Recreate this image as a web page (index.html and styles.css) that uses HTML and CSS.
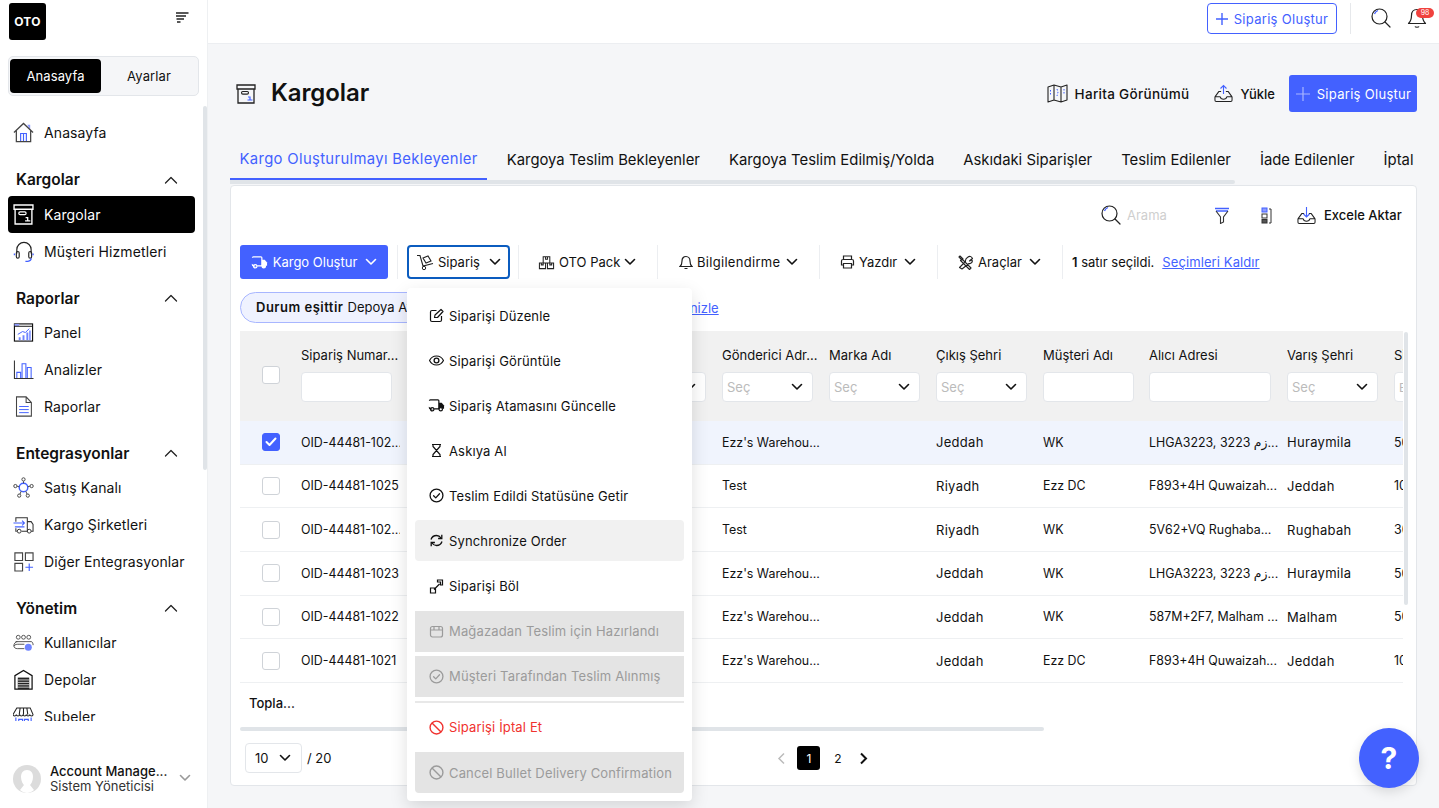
FILE: index.html
```html
<!DOCTYPE html>
<html lang="tr">
<head>
<meta charset="utf-8">
<title>Kargolar</title>
<link rel="stylesheet" href="styles.css">
</head>
<body>
<svg class="sprite" xmlns="http://www.w3.org/2000/svg">
  <symbol id="chev" viewBox="0 0 12 8"><path d="M1.5 1.5 6 6l4.5-4.5" fill="none" stroke="currentColor" stroke-width="1.6" stroke-linecap="round" stroke-linejoin="round"/></symbol>
  <symbol id="chevup" viewBox="0 0 14 8"><path d="M1.5 7 7 1.5 12.500 7" fill="none" stroke="currentColor" stroke-width="1.3" stroke-linecap="round" stroke-linejoin="round"/></symbol>
  <symbol id="search" viewBox="0 0 20 20"><circle cx="8.500" cy="8.500" r="7.500" fill="none" stroke="#222" stroke-width="1.200"/><path d="M3.500 6A5.500 5.500 0 0 1 7 2.500" fill="none" stroke="#4361ff" stroke-width="1.200"/><path d="m14 14 5 5" stroke="#222" stroke-width="1.200" stroke-linecap="round"/></symbol>
  <symbol id="tray" viewBox="0 0 20 20"><path d="M1 13.500 5 8h2.500M19 13.500 15 8h-2.500M1 13.500h5.500c.5 2 1.500 2.500 3.500 2.500s3-.5 3.500-2.500H19v3.700c0 .8-.6 1.300-1.300 1.300H2.300c-.7 0-1.300-.5-1.300-1.300z" fill="none" stroke="#222" stroke-width="1.100" stroke-linejoin="round"/></symbol>
  <symbol id="box" viewBox="0 0 20 20"><path d="M1 1h18v4H1zM2 5v14h16V5" fill="none" stroke="currentColor" stroke-width="1.300"/><rect x="5.500" y="7.500" width="7" height="2.600" rx="1.300" fill="none" stroke="currentColor" stroke-width="1.100"/><path d="M12 13h2v3m-2.500 0h5" fill="none" stroke="var(--accent,#4361ff)" stroke-width="1.200"/></symbol>
  <symbol id="truck" viewBox="0 0 18 15"><path d="M1.500 2.500c0-.6.400-1 1-1h8c.6 0 1 .4 1 1v8.500h-5M3 11H2.500c-.6 0-1-.4-1-1z" fill="none" stroke="currentColor" stroke-width="1.300"/><path d="M11.500 4.500h3l2.500 3v3.500h-1.500h-4z" fill="currentColor"/><circle cx="4.500" cy="11.500" r="1.800" fill="none" stroke="currentColor" stroke-width="1.300"/><circle cx="13.500" cy="11.500" r="1.800" fill="#fff" stroke="currentColor" stroke-width="1.300"/></symbol>
  <symbol id="checkc" viewBox="0 0 14 14"><circle cx="7" cy="7" r="6" fill="none" stroke="currentColor" stroke-width="1.200"/><path d="m4.300 7.200 2 2 3.500-3.800" fill="none" stroke="currentColor" stroke-width="1.200" stroke-linecap="round" stroke-linejoin="round"/></symbol>
  <symbol id="ban" viewBox="0 0 14 14"><circle cx="7" cy="7" r="6" fill="none" stroke="currentColor" stroke-width="1.300"/><path d="m2.800 2.800 8.400 8.400" stroke="currentColor" stroke-width="1.300"/></symbol>
</svg>

<aside class="sidebar">
  <div class="brand-row">
    <div class="logo">OTO</div>
    <svg class="burger" width="14" height="11" viewBox="0 0 14 11"><path d="M1 1h12.500M1 4h10M1.500 7h7.500M2 10h3.500" stroke="#222" stroke-width="1.300" fill="none"/></svg>
  </div>
  <div class="switch">
    <div class="switch-item is-on">Anasayfa</div>
    <div class="switch-item">Ayarlar</div>
  </div>
  <div class="nav-wrap">
    <nav class="nav">
      <a class="nav-item"><svg class="nav-ic" viewBox="0 0 22 22"><path d="M15 3h3v5" fill="#8d9bff"/><path d="M1 11 11 1.500 21 11M3.500 9v11.500h15V9" fill="none" stroke="#444" stroke-width="1.300"/><path d="M8 20V12h6v8M11 12v8" fill="none" stroke="#4361ff" stroke-width="1.200"/></svg><span>Anasayfa</span></a>

      <div class="group"><span>Kargolar</span><svg class="up"><use href="#chevup"/></svg></div>
      <a class="nav-item is-active"><svg class="nav-ic ic-white"><use href="#box"/></svg><span>Kargolar</span></a>
      <a class="nav-item"><svg class="nav-ic" viewBox="0 0 22 22"><path d="M4 13V9a7.500 7.500 0 0 1 15 0v4" fill="none" stroke="#222" stroke-width="1.200"/><rect x="3.500" y="11" width="3" height="7" rx="1.500" fill="none" stroke="#222" stroke-width="1.200"/><rect x="16.500" y="11" width="3" height="7" rx="1.500" fill="none" stroke="#222" stroke-width="1.200"/><path d="M1.500 13v2M21 13v2M19 18c0 2-2 3.500-6 3.500" fill="none" stroke="#4361ff" stroke-width="1.400"/></svg><span>Müşteri Hizmetleri</span></a>

      <div class="group"><span>Raporlar</span><svg class="up"><use href="#chevup"/></svg></div>
      <a class="nav-item"><svg class="nav-ic" viewBox="0 0 22 22"><rect x="1.500" y="2" width="19" height="18" fill="none" stroke="#111" stroke-width="1.200"/><path d="M1.500 2h5v2h-5z" fill="#8d9bff"/><path d="M1.500 4.500h19" stroke="#111"/><path d="M6 19v-3h2v3zm4 0v-5h2v5zm4 0V11h2v8zm3 0V9h1.500v10z" fill="#6f84ff"/><path d="m5 13 5-3 3 1 4-4" fill="none" stroke="#4361ff"/></svg><span>Panel</span></a>
      <a class="nav-item"><svg class="nav-ic" viewBox="0 0 22 22"><path d="M1.500 1.500v19h20" fill="none" stroke="#333" stroke-width="1.100"/><path d="M4 20v-6h4v6M9.500 20V5h4v15M15 20V9h4v11" fill="none" stroke="#4361ff" stroke-width="1.100"/></svg><span>Analizler</span></a>
      <a class="nav-item"><svg class="nav-ic" viewBox="0 0 22 24"><path d="M3 1h11l6 6.500V23H3zM14 1v6.500h6" fill="none" stroke="#444" stroke-width="1.200"/><path d="M6 12h11M6 15.500h11M6 19h11" stroke="#4361ff" stroke-width="1.100"/></svg><span>Raporlar</span></a>

      <div class="group"><span>Entegrasyonlar</span><svg class="up"><use href="#chevup"/></svg></div>
      <a class="nav-item"><svg class="nav-ic" viewBox="0 0 22 22"><circle cx="11" cy="11" r="4.500" fill="none" stroke="#4361ff" stroke-width="1.500"/><g fill="none" stroke="#444" stroke-width="1"><circle cx="11" cy="2.500" r="1.700"/><circle cx="2.500" cy="9.500" r="1.700"/><circle cx="19.500" cy="9.500" r="1.700"/><circle cx="6.500" cy="19.500" r="1.700"/><circle cx="15.500" cy="19.500" r="1.700"/><path d="M11 4.500v2M4.300 9.700l2.200.5M17.700 9.700l-2.200.5M7.300 18l1.200-3M14.700 18l-1.200-3"/></g></svg><span>Satış Kanalı</span></a>
      <a class="nav-item"><svg class="nav-ic" viewBox="0 0 22 22"><path d="M3 8V4h12v14H9M15 8h4l2 3v7h-2M3 15v3h1" fill="none" stroke="#333" stroke-width="1.100"/><circle cx="6.500" cy="18" r="2" fill="none" stroke="#333"/><circle cx="17" cy="18" r="2" fill="none" stroke="#333"/><path d="M.5 9.500H12m-2.500-2.500L12 9.500 9.500 12M12 13.500H2" fill="none" stroke="#4361ff" stroke-width="1.100"/></svg><span>Kargo Şirketleri</span></a>
      <a class="nav-item"><svg class="nav-ic" viewBox="0 0 22 22"><path d="M2 2h8v8H2zM13 2h8v8h-8zM2 13h8v8H2z" fill="none" stroke="#444" stroke-width="1.200"/><path d="M17 13v8M13 17h8" stroke="#4361ff" stroke-width="1.200"/></svg><span>Diğer Entegrasyonlar</span></a>

      <div class="group"><span>Yönetim</span><svg class="up"><use href="#chevup"/></svg></div>
      <a class="nav-item"><svg class="nav-ic" viewBox="0 0 24 22"><g fill="none" stroke="#444" stroke-width="1"><circle cx="6" cy="5" r="2.200"/><circle cx="12" cy="5" r="2.200"/><circle cx="18" cy="5" r="2.200"/><path d="M3 10h18M1 15c0-3 2-5 4-5M23 14c0-2-1-4-2-4M1 15c0 2 2 3 4 3h8M1 15c1-2 4-2 6-2h6"/></g><circle cx="17.500" cy="16.500" r="4" fill="#6f84ff"/></svg><span>Kullanıcılar</span></a>
      <a class="nav-item"><svg class="nav-ic" viewBox="0 0 22 22"><path d="M2 21V7l9-5.500L20 7v14z" fill="none" stroke="#111" stroke-width="1.300"/><path d="M5 9h12v12H5z" fill="#222"/><path d="M5 11.500h12M5 14h12M5 16.500h12M5 19h12" stroke="#fff" stroke-width=".8"/></svg><span>Depolar</span></a>
      <a class="nav-item"><svg class="nav-ic" viewBox="0 0 22 22"><path d="M4 2h14l3 7c0 2-3 2-3.500 0-.5 2-3 2-3.500 0-.5 2-3 2-3.500 0-.5 2-3 2-3.500 0-.5 2-3 2-3.500 0-.5 2-3 2-3.500 0zM7.500 2l-1 7M11 2v7M14.500 2l1 7" fill="none" stroke="#222" stroke-width="1.100"/><path d="M3 12v9h16v-9M6 14h4v7H6zM12 14h4v7h-4z" fill="none" stroke="#4361ff" stroke-width="1.200"/></svg><span>Şubeler</span></a>
    </nav>
    <div class="nav-thumb"></div>
  </div>
  <div class="user">
    <svg class="avatar" viewBox="0 0 28 28"><circle cx="14" cy="14" r="14" fill="#dcdcdc"/><path d="M14 5c4 0 6 3 6 7s-2 7-3 8l4 5c-2 2-5 3-7 3s-5-1-7-3l4-5c-1-1-3-4-3-8s2-7 6-7z" fill="#fff"/></svg>
    <div class="user-text"><strong>Account Manage...</strong><span>Sistem Yöneticisi</span></div>
    <svg class="user-chev"><use href="#chev"/></svg>
  </div>
</aside>

<div class="main">
  <header class="topbar">
    <button class="btn-outline"><svg width="12" height="12" viewBox="0 0 12 12"><path d="M6 0v12M0 6h12" stroke="#4361ff" stroke-width="1.400"/></svg>Sipariş Oluştur</button>
    <div class="top-sep"></div>
    <svg class="top-search"><use href="#search"/></svg>
    <div class="bell">
      <svg width="20" height="22" viewBox="0 0 20 22"><path d="M10 2.500c-3.500 0-5.500 2.500-5.500 6 0 4-1 6-3 8h17c-2-2-3-4-3-8 0-3.500-2-6-5.500-6zM8 19.500c.5 1 3.500 1 4 0" fill="none" stroke="#222" stroke-width="1.200" stroke-linejoin="round"/></svg>
      <span class="badge">98</span>
    </div>
  </header>

  <main class="page">
    <div class="page-head">
      <div class="title-wrap">
        <svg class="title-ic"><use href="#box"/></svg>
        <h1>Kargolar</h1>
      </div>
      <div class="head-actions">
        <a class="head-link head-map"><svg width="21" height="19" viewBox="0 0 21 19"><path d="M1 3l6-2 7 2 6-2v15l-6 2-7-2-6 2zM7 1v15M14 3v15" fill="none" stroke="#222" stroke-width="1.100" stroke-linejoin="round"/><path d="M3.500 6v5M10 5l1 3-1 4M17 5v5" fill="none" stroke="#4361ff" stroke-dasharray="1.500 1.500"/></svg>Harita Görünümü</a>
        <a class="head-link head-link-2"><svg width="19" height="19"><use href="#tray"/><path d="M9.500 10V1.500M6.500 4.500l3-3 3 3" fill="none" stroke="#4361ff" stroke-width="1.100"/></svg>Yükle</a>
        <button class="btn-primary"><svg width="16" height="16" viewBox="0 0 16 16"><path d="M8 1v14M1 8h14" stroke="#a9b6ff" stroke-width="1.200"/></svg>Sipariş Oluştur</button>
      </div>
    </div>

    <div class="tabs-wrap">
      <div class="tabs">
        <a class="tab is-current">Kargo Oluşturulmayı Bekleyenler</a>
        <a class="tab">Kargoya Teslim Bekleyenler</a>
        <a class="tab">Kargoya Teslim Edilmiş/Yolda</a>
        <a class="tab">Askıdaki Siparişler</a>
        <a class="tab">Teslim Edilenler</a>
        <a class="tab">İade Edilenler</a>
        <a class="tab">İptal Edilenler</a>
      </div>
      <div class="tabs-track"></div>
    </div>

    <section class="card">
      <div class="tools">
        <svg class="tool-search"><use href="#search"/></svg>
        <input class="search-input" placeholder="Arama">
        <svg class="tool-filter" width="16" height="17" viewBox="0 0 16 17"><path d="M1 1.500h14M2 4h12" stroke="#4361ff" stroke-width="1.300"/><path d="M2 4l4.500 6v6.500l3-1.500V10L14 4" fill="none" stroke="#333" stroke-width="1.100"/></svg>
        <svg class="tool-cols" width="11" height="17" viewBox="0 0 11 17"><rect x="1" y="1" width="5" height="4" fill="#8d9bff" stroke="#4361ff"/><rect x="1" y="7" width="5" height="4" fill="none" stroke="#333"/><rect x="1" y="12.500" width="5" height="3.500" fill="#555" stroke="#333"/><path d="M8 2h2v14H8" fill="none" stroke="#333"/></svg>
        <svg class="tool-export" width="19" height="19"><use href="#tray"/><path d="M9.500 1v10M6.500 8l3 3 3-3" fill="none" stroke="#4361ff" stroke-width="1.100"/></svg>
        <span class="tool-text">Excele Aktar</span>
      </div>

      <div class="actions">
        <button class="btn-cargo"><svg width="17" height="15"><use href="#truck"/></svg>Kargo Oluştur<svg class="chev"><use href="#chev"/></svg></button>
        <div class="act-sep act-sep-a"></div>
        <div class="order-wrap">
          <button class="btn-order">
            <svg width="18" height="17" viewBox="0 0 18 17"><path d="M1 1.500h3l3 10.500 10-2.500" fill="none" stroke="#222" stroke-width="1.100"/><circle cx="8" cy="14" r="1.700" fill="none" stroke="#222"/><path d="m7 4 5-2 3 5-5 2z" fill="none" stroke="#222" stroke-width="1.100"/></svg>
            Sipariş<svg class="chev"><use href="#chev"/></svg>
          </button>
          <div class="menu">
            <a class="menu-item"><svg width="15" height="15" viewBox="0 0 15 15"><path d="M12.500 8v4c0 1-.5 1.500-1.500 1.500H3c-1 0-1.500-.5-1.500-1.500V4C1.500 3 2 2.500 3 2.500h4.500" fill="none" stroke="currentColor" stroke-width="1.200"/><path d="M5.500 9.500l.5-2.500 6-5.500 2 2-5.500 6z" fill="none" stroke="currentColor" stroke-width="1.200" stroke-linejoin="round"/></svg>Siparişi Düzenle</a>
            <a class="menu-item"><svg width="15" height="15" viewBox="0 0 15 15"><path d="M.5 7.500C2 4.500 4.500 3 7.500 3s5.500 1.500 7 4.500c-1.500 3-4 4.500-7 4.500s-5.500-1.500-7-4.500z" fill="none" stroke="currentColor" stroke-width="1.200"/><circle cx="7.500" cy="7.500" r="2.400" fill="none" stroke="currentColor" stroke-width="1.300"/></svg>Siparişi Görüntüle</a>
            <a class="menu-item item-truck"><svg width="17" height="15"><use href="#truck"/></svg>Sipariş Atamasını Güncelle</a>
            <a class="menu-item"><svg width="15" height="15" viewBox="0 0 15 15"><path d="M3 1.500h9M3 13.500h9M4 1.500v2L11 11.500v2M11 1.500v2L4 11.500v2" fill="none" stroke="currentColor" stroke-width="1.200"/></svg>Askıya Al</a>
            <a class="menu-item"><svg width="15" height="15"><use href="#checkc"/></svg>Teslim Edildi Statüsüne Getir</a>
            <a class="menu-item is-hover"><svg width="15" height="15" viewBox="0 0 15 15"><path d="M2 6.500C3 3.500 5 2.500 7.500 2.500c2 0 3.500 1 4.500 2.500M13 8.500c-1 3-3 4-5.500 4-2 0-3.500-1-4.500-2.500" fill="none" stroke="currentColor" stroke-width="1.300"/><path d="M12.800 1.800v3.700H9.100M2.200 13.200V9.500h3.700" fill="none" stroke="currentColor" stroke-width="1.300"/></svg>Synchronize Order</a>
            <a class="menu-item"><svg width="15" height="15" viewBox="0 0 15 15"><path d="M8.500 1h5v5h-2V3h-3zM1.500 9h5v5h-5zM5 10.500 10.500 5" fill="none" stroke="currentColor" stroke-width="1.200"/></svg>Siparişi Böl</a>
            <a class="menu-item is-off"><svg width="15" height="15" viewBox="0 0 15 15"><rect x="1.500" y="2.500" width="12" height="10.500" rx="2" fill="none" stroke="currentColor" stroke-width="1.200"/><path d="M1.500 6h12M5 2.500V6M10 2.500V6" fill="none" stroke="currentColor" stroke-width="1.200"/></svg>Mağazadan Teslim için Hazırlandı</a>
            <a class="menu-item is-off"><svg width="15" height="15"><use href="#checkc"/></svg>Müşteri Tarafından Teslim Alınmış</a>
            <div class="menu-div"></div>
            <a class="menu-item is-danger"><svg width="15" height="15"><use href="#ban"/></svg>Siparişi İptal Et</a>
            <a class="menu-item is-off is-last"><svg width="15" height="15"><use href="#ban"/></svg>Cancel Bullet Delivery Confirmation</a>
          </div>
        </div>
        <div class="act-sep act-sep-b"></div>
        <div class="act act-pack"><svg width="17" height="15" viewBox="0 0 18 15"><path d="M1.500 8h6.500v6H1.500zM10 8h6.500v6H10zM5.500 1.500h7V8h-7zM8 1.500V4h2V1.500M3.500 8v2h2V8M12.500 8v2h2V8" fill="none" stroke="#222" stroke-width="1.100"/></svg>OTO Pack<svg class="chev"><use href="#chev"/></svg></div>
        <div class="act-sep"></div>
        <div class="act act-notify"><svg width="14" height="15" viewBox="0 0 14 15"><path d="M7 1.500C4.500 1.500 3 3.500 3 6c0 3-.8 4.500-2 5.500h12c-1.200-1-2-2.500-2-5.500 0-2.500-1.500-4.500-4-4.500zM5.500 13.500h3" fill="none" stroke="#222" stroke-width="1.200"/></svg>Bilgilendirme<svg class="chev"><use href="#chev"/></svg></div>
        <div class="act-sep"></div>
        <div class="act act-print"><svg width="15" height="14" viewBox="0 0 15 14"><path d="M3.500 4.500V1h8v3.500M3.500 10H1.500V6c0-1 .6-1.500 1.500-1.500h9c.9 0 1.500.5 1.500 1.500v4h-2M3.500 8.500h8V13h-8z" fill="none" stroke="#222" stroke-width="1.200"/></svg>Yazdır<svg class="chev"><use href="#chev"/></svg></div>
        <div class="act-sep"></div>
        <div class="act act-tools"><svg width="16" height="15" viewBox="0 0 16 15"><path d="M2 1l3 3-1 1-3-3zM4 4l9 9-1.500 1.500-9-9zM10 2c2-1.500 4 0 4.500 1.500L12.500 5l-1 1L14 5c1 2-1 4-3 3.500L4 14l-2.500-1.500 6-6C7 4 8.500 3 10 2z" fill="none" stroke="#222" stroke-width="1.100" stroke-linejoin="round"/></svg>Araçlar<svg class="chev"><use href="#chev"/></svg></div>
        <div class="act-sep"></div>
        <div class="sel-info"><b>1</b> satır seçildi.</div>
        <a class="link clear-link">Seçimleri Kaldır</a>
      </div>

      <div class="chips">
        <div class="chip"><b>Durum eşittir</b> Depoya Atanmış</div>
        <a class="link">Önizle</a>
      </div>

      <div class="table-area">
        <div class="table-col">
          <div class="table-view">
            <div class="grid-row head">
              <div class="cell cell-check"><span class="check"></span></div>
              <div class="cell"><label>Sipariş Numar...</label><input class="fld"></div>
              <div class="cell span2"></div>
              <div class="cell"><label>Durum</label><div class="fld sel">Seç<svg class="chev"><use href="#chev"/></svg></div></div>
              <div class="cell"><label>Gönderici Adr...</label><div class="fld sel">Seç<svg class="chev"><use href="#chev"/></svg></div></div>
              <div class="cell"><label>Marka Adı</label><div class="fld sel">Seç<svg class="chev"><use href="#chev"/></svg></div></div>
              <div class="cell"><label>Çıkış Şehri</label><div class="fld sel">Seç<svg class="chev"><use href="#chev"/></svg></div></div>
              <div class="cell"><label>Müşteri Adı</label><input class="fld"></div>
              <div class="cell cell-addr"><label>Alıcı Adresi</label><input class="fld"></div>
              <div class="cell"><label>Varış Şehri</label><div class="fld sel">Seç<svg class="chev"><use href="#chev"/></svg></div></div>
              <div class="cell"><label>Sipariş Tutarı</label><input class="fld" placeholder="Başlangıç"></div>
            </div>
            <div class="grid-row row is-selected">
              <div class="cell cell-check"><span class="check is-checked"><svg width="12" height="10" viewBox="0 0 12 10"><path d="m1.500 5 3 3 6-6.500" fill="none" stroke="#fff" stroke-width="2" stroke-linecap="round" stroke-linejoin="round"/></svg></span></div>
              <div class="cell">OID-44481-102...</div><div class="cell span3"></div>
              <div class="cell">Ezz's Warehou...</div><div class="cell"></div><div class="cell city">Jeddah</div><div class="cell">WK</div><div class="cell">LHGA3223, 3223 زم...</div><div class="cell city">Huraymila</div><div class="cell">50.00</div>
            </div>
            <div class="grid-row row">
              <div class="cell cell-check"><span class="check"></span></div>
              <div class="cell">OID-44481-1025</div><div class="cell span3"></div>
              <div class="cell">Test</div><div class="cell"></div><div class="cell city">Riyadh</div><div class="cell">Ezz DC</div><div class="cell">F893+4H Quwaizah...</div><div class="cell city">Jeddah</div><div class="cell">10.00</div>
            </div>
            <div class="grid-row row">
              <div class="cell cell-check"><span class="check"></span></div>
              <div class="cell">OID-44481-102...</div><div class="cell span3"></div>
              <div class="cell">Test</div><div class="cell"></div><div class="cell city">Riyadh</div><div class="cell">WK</div><div class="cell">5V62+VQ Rughaba...</div><div class="cell city">Rughabah</div><div class="cell">30.00</div>
            </div>
            <div class="grid-row row">
              <div class="cell cell-check"><span class="check"></span></div>
              <div class="cell">OID-44481-1023</div><div class="cell span3"></div>
              <div class="cell">Ezz's Warehou...</div><div class="cell"></div><div class="cell city">Jeddah</div><div class="cell">WK</div><div class="cell">LHGA3223, 3223 زم...</div><div class="cell city">Huraymila</div><div class="cell">50.00</div>
            </div>
            <div class="grid-row row">
              <div class="cell cell-check"><span class="check"></span></div>
              <div class="cell">OID-44481-1022</div><div class="cell span3"></div>
              <div class="cell">Ezz's Warehou...</div><div class="cell"></div><div class="cell city">Jeddah</div><div class="cell">WK</div><div class="cell">587M+2F7, Malham ...</div><div class="cell city">Malham</div><div class="cell">50.00</div>
            </div>
            <div class="grid-row row">
              <div class="cell cell-check"><span class="check"></span></div>
              <div class="cell">OID-44481-1021</div><div class="cell span3"></div>
              <div class="cell">Ezz's Warehou...</div><div class="cell"></div><div class="cell city">Jeddah</div><div class="cell">Ezz DC</div><div class="cell">F893+4H Quwaizah...</div><div class="cell city">Jeddah</div><div class="cell">10.00</div>
            </div>
            <div class="total">Topla...</div>
          </div>
          <div class="h-track"><div class="h-thumb"></div></div>
        </div>
        <div class="v-thumb"></div>
      </div>

      <div class="pager-row">
        <div class="size"><span class="size-box">10<svg class="chev"><use href="#chev"/></svg></span><span>/ 20</span></div>
        <div class="pager">
          <svg class="pg-prev" width="9" height="13" viewBox="0 0 9 13"><path d="M7 1.500 2 6.500l5 5" fill="none" stroke="currentColor" stroke-width="1.500"/></svg>
          <span class="pg pg-on">1</span>
          <span class="pg">2</span>
          <svg class="pg-next" width="9" height="13" viewBox="0 0 9 13"><path d="m2 1.500 5 5-5 5" fill="none" stroke="currentColor" stroke-width="2"/></svg>
        </div>
      </div>
    </section>
  </main>
</div>

<button class="help">?</button>
</body>
</html>
```

FILE: styles.css
```css
* { box-sizing: border-box; }
html, body { height: 100%; }
body {
  margin: 0;
  width: 1439px;
  height: 808px;
  overflow: hidden;
  display: flex;
  background: #f5f6f8;
  color: #111;
  font-family: Inter, "Noto Sans", "DejaVu Sans", sans-serif;
  font-size: 13px;
  position: relative;
}
button, input { font: inherit; }
.sprite { display: none; }
svg { flex: none; display: block; }
a { color: inherit; text-decoration: none; }
b, strong { font-weight: 600; }

/* sidebar */
.sidebar {
  width: 208px;
  flex: none;
  height: 808px;
  background: #fff;
  border-right: 1px solid #eef0f2;
  display: flex;
  flex-direction: column;
}
.brand-row { display: flex; align-items: flex-start; padding: 3px 0 0 9px; height: 40px; }
.logo {
  width: 37px; height: 37px; background: #000; color: #fff; border-radius: 3px;
  display: flex; align-items: center; justify-content: center;
  font-weight: 700; font-size: 12px; letter-spacing: .3px;
}
.burger { margin: 9px 0 0 129px; }
.switch {
  margin: 16px 0 0 8px;
  width: 191px; height: 40px;
  background: #f5f6f8;
  border: 1px solid #e3e6ea;
  border-radius: 5px;
  padding: 2px 1px;
  display: flex;
}
.switch-item { flex: 1; display: flex; align-items: center; justify-content: center; border-radius: 4px; font-size: 13px; letter-spacing: .1px; }
.switch-item.is-on { flex: none; width: 91px; background: #000; color: #fff; }
.nav-wrap { flex: 1; min-height: 0; margin-top: 10px; display: flex; }
.nav { width: 203px; flex: none; overflow: hidden; padding: 8.6px 0 0 8px; }
.nav-item {
  display: flex; align-items: center; gap: 10px;
  width: 187px; height: 36.67px;
  padding-left: 5px;
  border-radius: 4px;
  font-size: 14px;
  letter-spacing: .1px;
  white-space: nowrap;
}
.nav-ic { width: 21px; height: 21px; }
.nav-item.is-active { background: #000; color: #fff; }
.ic-white { color: #fff; --accent: #fff; }
.group {
  height: 33px; margin-top: 12px;
  display: flex; align-items: center; justify-content: space-between;
  padding: 0 17px 0 8px; width: 187px;
  font-size: 15.5px; font-weight: 600;
}
.up { width: 14px; height: 8px; color: #222; }
.nav-thumb { width: 4px; height: 364px; background: #e0e4e8; border-radius: 2px; }
.user { height: 87px; flex: none; display: flex; align-items: center; padding: 0 0 0 13px; }
.avatar { width: 28px; height: 28px; margin-top: 28px; }
.user-text { display: flex; flex-direction: column; margin: 28px 0 0 9px; line-height: 15px; font-size: 13px; width: 129px; white-space: nowrap; }
.user-text strong { font-weight: 500; }
.user-text span { color: #333; }
.user-chev { width: 12px; height: 8px; margin-top: 26px; color: #999; }

/* main */
.main { flex: 1; min-width: 0; display: flex; flex-direction: column; }
.topbar {
  height: 44px; flex: none; background: #fff; border-bottom: 1px solid #eceef1;
  display: flex; align-items: flex-start; justify-content: flex-end;
  padding: 3px 12px 0 0;
}
.btn-outline {
  width: 130px; height: 31px; background: #fff; color: #4361ff;
  border: 1px solid #4361ff; border-radius: 4px; white-space: nowrap; padding: 0;
  display: flex; align-items: center; justify-content: center; gap: 6px; font-size: 13px; letter-spacing: .3px;
}
.top-sep { width: 1px; height: 31px; background: #e6e8eb; margin: 0 20px 0 13px; }
.top-search { width: 20px; height: 20px; margin-top: 5px; }
.bell { position: relative; margin: 4px 1px 0 16px; width: 19px; }
.badge {
  position: absolute; left: 9px; top: 1px; width: 18px; height: 10px;
  background: #f0413d; color: #fff; font-size: 7px; line-height: 10px;
  border-radius: 5px; text-align: center;
}
.page { flex: 1; min-height: 0; padding: 31px 22px 0; display: flex; flex-direction: column; }
.page-head { height: 37px; flex: none; display: flex; justify-content: space-between; align-items: center; }
.title-wrap { display: flex; align-items: center; padding-left: 6px; gap: 15px; }
.title-ic { width: 20px; height: 20px; color: #222; }
h1 { margin: -2px 0 0; font-size: 24px; font-weight: 600; letter-spacing: -.1px; }
.head-actions { display: flex; align-items: center; }
.head-link { display: flex; align-items: center; gap: 7px; font-weight: 500; white-space: nowrap; }
.head-map { font-size: 13.5px; letter-spacing: .3px; }
.head-link-2 { margin: 0 14px 0 25px; }
.btn-primary {
  width: 128px; height: 37px; border: 0; border-radius: 3px; background: #4361ff; color: #fff;
  display: flex; align-items: center; justify-content: center; gap: 6px; white-space: nowrap; padding: 0; letter-spacing: .3px;
}
.tabs-wrap { margin-top: 27px; width: 1187px; overflow: hidden; flex: none; }
.tabs { display: flex; gap: 10px; height: 41px; }
.tab { flex: none; height: 41px; padding: 0 9.500px; display: flex; align-items: center; font-size: 14.85px; white-space: nowrap; }
.tab.is-current { color: #4361ff; border-bottom: 2px solid #4361ff; letter-spacing: .33px; }
.tabs-track { width: 1005px; height: 4px; background: #e0e4e8; border-radius: 0 2px 2px 0; margin-bottom: 1px; }
.card {
  width: 1187px; height: 601px; background: #fff; flex: none;
  border: 1px solid #e3e6ea; border-radius: 4px;
  padding: 18px 8px 0 9px;
  display: flex; flex-direction: column;
}
.tools { height: 22px; flex: none; display: flex; align-items: center; padding-left: 861px; }
.tool-search { width: 20px; height: 20px; }
.search-input { width: 60px; margin-left: 6px; border: 0; outline: 0; padding: 0; color: #aaa; background: transparent; }
.search-input::placeholder { color: #cfcfcf; }
.tool-filter { margin-left: 27px; }
.tool-cols { margin-left: 31px; }
.tool-export { margin-left: 25px; width: 19px; height: 19px; }
.tool-text { margin-left: 8px; font-weight: 500; white-space: nowrap; }
.actions { margin-top: 19px; height: 34px; flex: none; display: flex; align-items: center; white-space: nowrap; }
.chev { width: 12px; height: 8px; }
.btn-cargo {
  width: 148px; height: 34px; background: #4361ff; color: #fff; border: 0; border-radius: 3px; padding: 0;
  display: flex; align-items: center; justify-content: center; gap: 5px;
}
.btn-cargo .chev { margin-left: 3px; }
.act-sep { width: 1px; height: 34px; background: #eceef1; flex: none; }
.act-sep-a { margin: 0 9px 0 9px; }
.act-sep-b { margin: 0 0 0 8px; }
.order-wrap { position: relative; }
.btn-order {
  width: 103px; height: 34px; background: #fff; border: 2px solid #0b5cbf; border-radius: 4px; padding: 0;
  display: flex; align-items: center; justify-content: center; gap: 4px; color: #111;
}
.btn-order .chev { margin-left: 5px; }
.act { display: flex; align-items: center; gap: 4px; padding: 0 21px 0 20px; height: 34px; flex: none; }
.act .chev { margin-left: auto; }
.act-pack { width: 138px; padding-left: 19px; }
.act-notify { width: 161px; padding-left: 21px; letter-spacing: .3px; }
.act-print { width: 117px; }
.act-tools { width: 124px; }
.sel-info { margin-left: 9px; }
.clear-link { margin-left: 8px; letter-spacing: .1px; }
.link { color: #4361ff; text-decoration: underline; white-space: nowrap; }

.menu {
  position: absolute; left: 0; top: 43px; z-index: 5;
  width: 285px; height: 513px; background: #fff; border-radius: 4px;
  box-shadow: 0 6px 18px rgba(0,0,0,.13);
  padding: 7px 8px;
  display: flex; flex-direction: column; gap: 4.1px;
}
.menu-item { height: 41px; flex: none; display: flex; align-items: center; gap: 5px; padding-left: 14px; white-space: nowrap; border-radius: 4px; color: #111; letter-spacing: .15px; }
.item-truck { padding-left: 13px; gap: 4px; }
.menu-item.is-hover { background: #f1f1f1; }
.menu-item.is-off { background: #e4e4e4; color: #9b9b9b; border-radius: 0; }
.menu-item.is-last { border-radius: 0 0 4px 4px; }
.menu-item.is-danger { color: #f0322f; }
.menu-div { height: 2px; background: #e8e8e8; flex: none; }

.chips { margin-top: 13px; height: 31px; flex: none; display: flex; align-items: center; gap: 40px; }
.chip {
  width: 400px; height: 31px; flex: none; overflow: hidden; white-space: nowrap;
  background: #eff2ff; border: 1px solid #a8b6ff; border-radius: 16px;
  padding: 0 15px 1px; display: flex; align-items: center; gap: 4px;
}
.chip b { letter-spacing: .5px; }
.table-area { margin-top: 8px; flex: none; display: flex; gap: 1px; }
.table-col { width: 1163px; flex: none; }
.table-view { width: 1163px; height: 394px; overflow: hidden; }
.v-thumb { width: 4px; height: 273px; margin-top: 1px; background: #e0e4e8; border-radius: 2px; }
.grid-row {
  display: grid;
  width: 1253px;
  grid-template-columns: 53px 107px 107px 100px 107px 107px 107px 107px 106px 138px 107px 107px;
}
.span2 { grid-column: span 2; }
.span3 { grid-column: span 3; }
.head { height: 90px; background: #f1f1f1; }
.head .cell { display: block; padding: 16px 8px 0; }
.head label { display: block; height: 17px; line-height: 17px; margin-bottom: 8px; white-space: nowrap; }
.head .cell-check { display: flex; padding: 35px 0 0 22px; }
.fld {
  display: block; width: 91px; height: 30px; background: #fff;
  border: 1px solid #e3e6ea; border-radius: 4px; outline: 0; padding: 0 4px; font-size: 12px;
}
.fld::placeholder { color: #bbb; }
.cell-addr .fld { width: 122px; }
.sel { display: flex; align-items: center; justify-content: space-between; color: #bbb; padding: 0 9px 0 4px; font-size: 13px; }
.sel .chev { color: #111; }
.row { height: 43.67px; border-bottom: 1px solid #eef0f2; background: #fff; }
.row .cell { display: flex; align-items: center; padding: 0 8px; white-space: nowrap; overflow: hidden; font-size: 12.400px; }
.row .cell-check { padding-left: 22px; }
.row .city { font-size: 13px; letter-spacing: .3px; }
.row.is-selected { background: #f0f4fd; }
.check { width: 18px; height: 18px; border: 1px solid #cfd3d8; border-radius: 3px; background: #fff; display: flex; align-items: center; justify-content: center; }
.check.is-checked { background: #4361ff; border-color: #4361ff; }
.total { height: 41px; display: flex; align-items: center; padding-left: 9px; font-weight: 500; }
.h-track { margin-top: 2px; height: 4px; background: transparent; }
.h-thumb { width: 804px; height: 4px; background: #e0e4e8; border-radius: 2px; }
.pager-row { margin-top: 12px; height: 30px; flex: none; display: flex; align-items: center; padding-left: 5px; }
.size { display: flex; align-items: center; gap: 5px; }
.size-box {
  width: 57px; height: 30px; border: 1px solid #e3e6ea; border-radius: 4px;
  display: flex; align-items: center; justify-content: space-between; padding: 0 10px 0 9px;
}
.pager { margin-left: 446px; display: flex; align-items: center; }
.pg-prev { color: #bbb; margin-right: 11px; }
.pg { width: 23px; height: 24px; display: flex; align-items: center; justify-content: center; border-radius: 3px; font-size: 12px; }
.pg-on { background: #000; color: #fff; margin-right: 6px; }
.pg-next { margin-left: 10px; color: #111; }
.help {
  position: absolute; left: 1359px; top: 728px; width: 60px; height: 60px; border-radius: 50%;
  background: #4361ff; border: 0; color: #fff; font-size: 30px; font-weight: 700; padding: 0;
  box-shadow: 0 4px 12px rgba(0,0,0,.12); z-index: 6;
}
```
